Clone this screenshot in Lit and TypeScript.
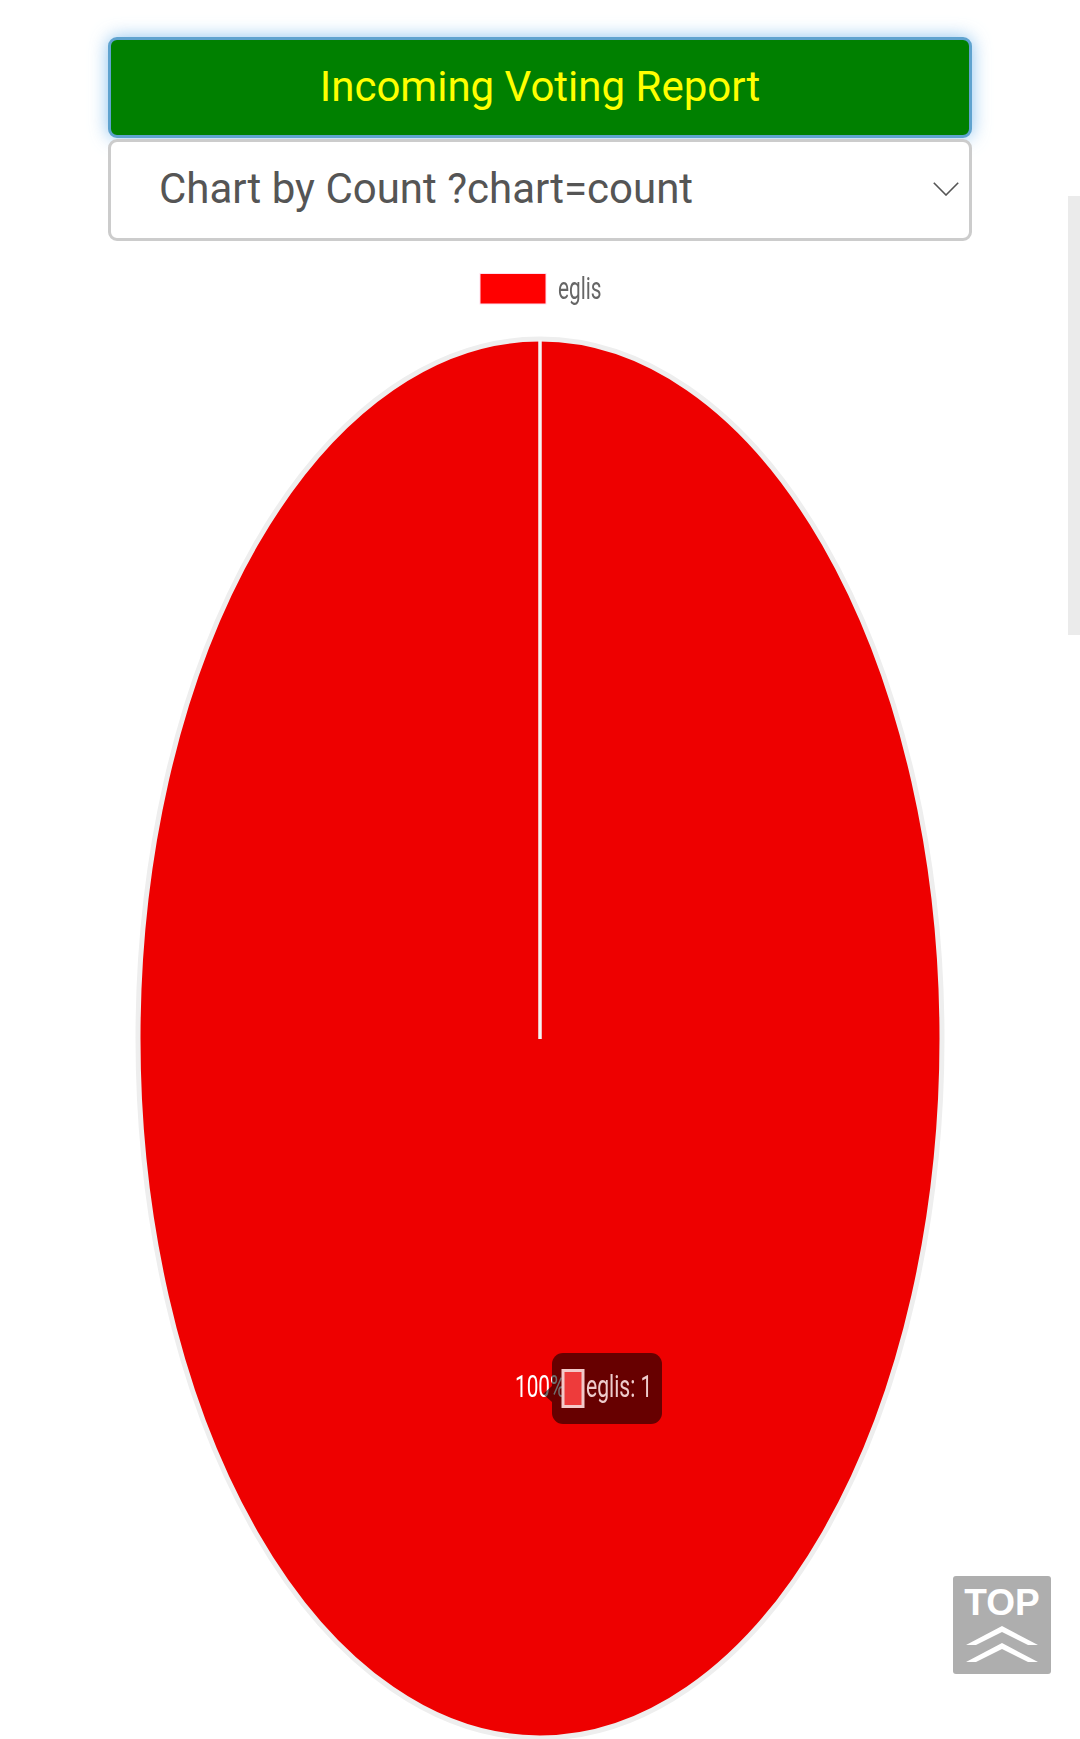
import { LitElement, html, css } from "lit";
import { customElement } from "lit/decorators.js";

@customElement("app-root")
export class AppRoot extends LitElement {
  static styles = css`
    :host { display: block; position: relative; height: 1739px; overflow: hidden; background: #fff; font-family: Roboto, "Liberation Sans", sans-serif; }
    .controls { display: flex; flex-direction: column; gap: 1px; padding: 37px 108px 0; }
    .title { display: flex; align-items: center; justify-content: center; height: 101px; box-sizing: border-box; border: 3px solid #5fa3cf; border-radius: 9px; background: #008000; color: #ffff00; font-size: 42px; padding-bottom: 3px; box-shadow: 0 0 18px rgba(102,175,233,.75); }
    .select-wrap { position: relative; height: 102px; }
    select { appearance: none; -webkit-appearance: none; width: 100%; height: 100%; box-sizing: border-box; border: 3px solid #ccc; border-radius: 9px; background: #fff; color: #555; font: 42px Roboto, "Liberation Sans", sans-serif; padding: 0 0 4px 48px; outline: none; }
    .chev { position: absolute; right: 13px; top: 43px; width: 26px; height: 14px; pointer-events: none; }
    .chart { display: block; width: 1080px; height: 1498px; filter: blur(.35px); }
    .legend-text { font-size: 32px; fill: #666; }
    .tip-label { font-size: 32px; fill: #fff; }
    .scroll { position: absolute; left: 1068px; top: 196px; width: 12px; height: 439px; background: #ebebeb; }
    .top { position: absolute; left: 953px; top: 1576px; width: 98px; height: 98px; background: #aeaeae; border-radius: 3px; display: flex; flex-direction: column; align-items: center; color: #fff; font: bold 37px "Liberation Sans", Arial, sans-serif; line-height: 1; padding-top: 8px; box-sizing: border-box; }
    .top svg { width: 72px; height: 36px; margin-top: 5px; }
  `;

  render() {
    return html`
      <div class="controls">
        <div class="title">Incoming Voting Report</div>
        <div class="select-wrap">
          <select><option>Chart by Count ?chart=count</option></select>
          <svg class="chev" viewBox="0 0 26 14" fill="none" stroke="#555" stroke-width="1.6"><path d="M.8.8 13 13 25.2.8"/></svg>
        </div>
      </div>
      <svg class="chart" viewBox="0 1 1080 1498">
        <rect x="480" y="33.5" width="66" height="30.5" fill="#f00" stroke="#fde" stroke-width="1"/>
        <text class="legend-text" transform="translate(558 59) scale(.65 1)">eglis</text>
        <ellipse cx="540" cy="798.5" rx="402" ry="699.5" fill="#ee0000" stroke="#eee" stroke-width="5"/>
        <path d="M540 100V799" stroke="#f4f4f4" stroke-width="3.5"/>
        <text class="tip-label" transform="translate(515 1157) scale(.65 1)">100%</text>
        <g>
          <path d="M552 1146 543 1154 552 1162Z" fill="rgba(0,0,0,.57)"/>
          <rect x="552" y="1113" width="110" height="71" rx="11" fill="rgba(0,0,0,.57)"/>
          <rect x="563" y="1130.5" width="20" height="36" fill="#ee3b3b" stroke="#f3c9c9" stroke-width="3"/>
          <text class="tip-label" style="fill:#ecc" transform="translate(586 1157) scale(.66 1)">eglis: 1</text>
        </g>
      </svg>
      <div class="scroll"></div>
      <div class="top">
        TOP
        <svg viewBox="0 0 72 36"><path fill="#fff" d="M0 19 36 0 72 19H62L36 6 10 19ZM0 36 36 17 72 36H62L36 23 10 36Z"/></svg>
      </div>
    `;
  }
}
